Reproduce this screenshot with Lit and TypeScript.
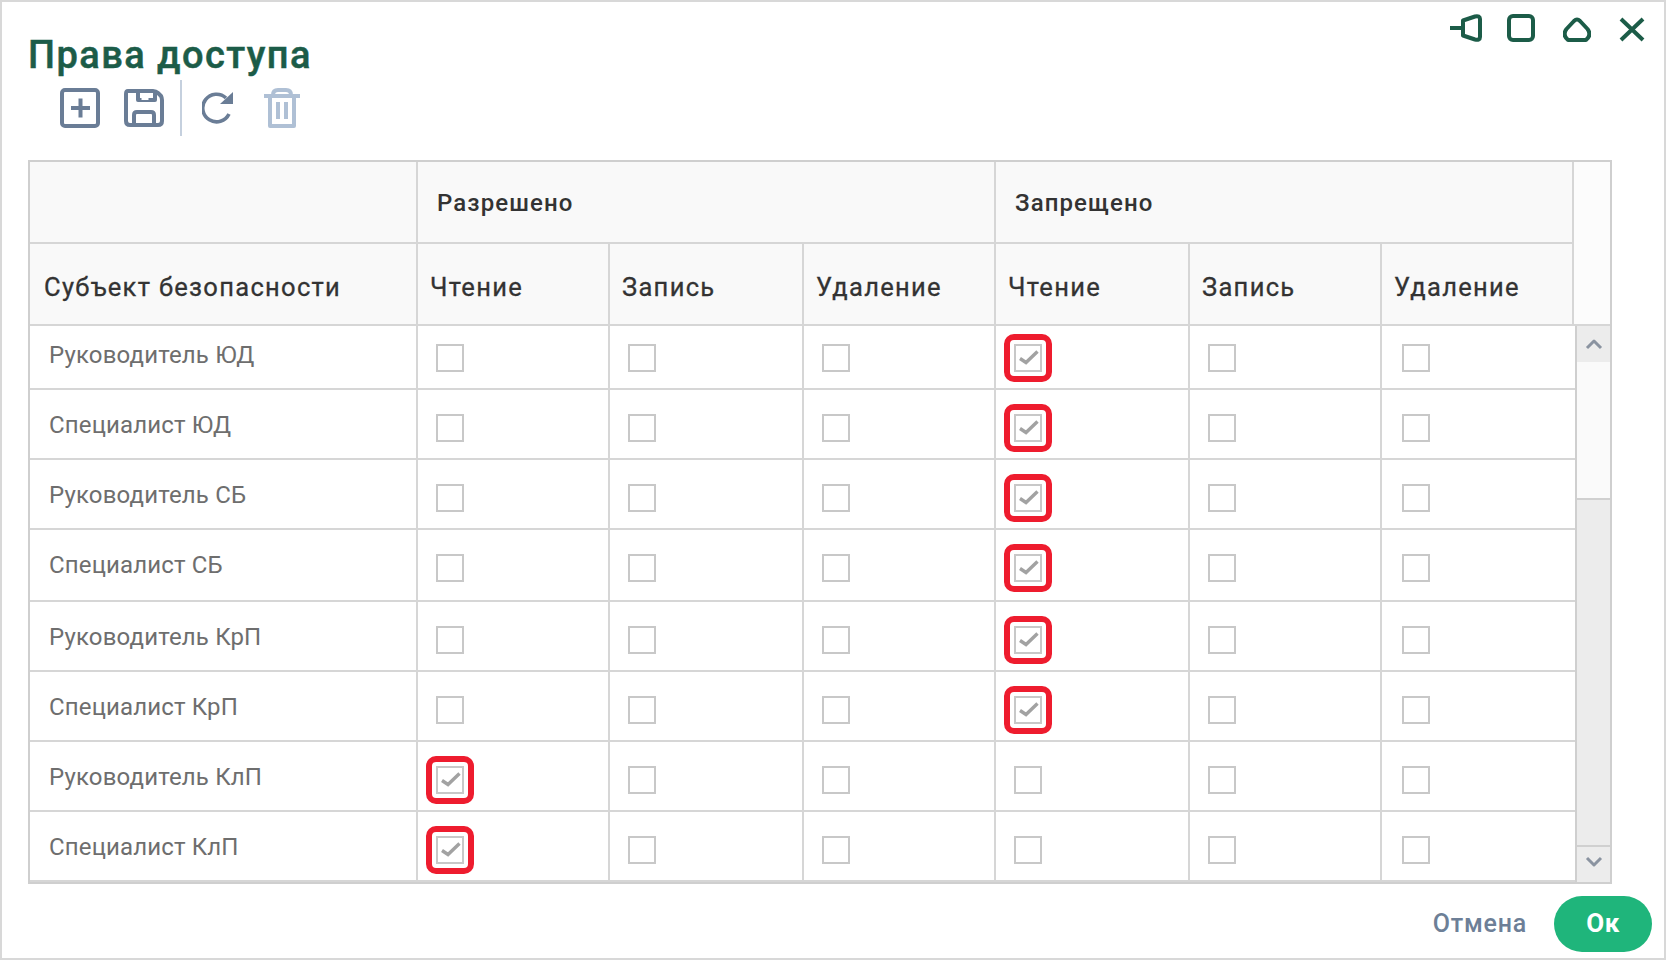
import { LitElement, html, css, svg } from "lit";
import { customElement } from "lit/decorators.js";

interface Row { name: string; checked: number[]; cls: string; }

const ROWS: Row[] = [
  { name: "Руководитель ЮД", checked: [3], cls: "short" },
  { name: "Специалист ЮД", checked: [3], cls: "" },
  { name: "Руководитель СБ", checked: [3], cls: "" },
  { name: "Специалист СБ", checked: [3], cls: "tall" },
  { name: "Руководитель КрП", checked: [3], cls: "" },
  { name: "Специалист КрП", checked: [3], cls: "" },
  { name: "Руководитель КлП", checked: [0], cls: "" },
  { name: "Специалист КлП", checked: [0], cls: "" },
];
const COLS = ["Чтение", "Запись", "Удаление", "Чтение", "Запись", "Удаление"];

@customElement("app-root")
export class AppRoot extends LitElement {
  static styles = css`
    :host { display: block; width: 1666px; height: 960px; }
    * { box-sizing: border-box; }
    .dialog {
      width: 1666px; height: 960px; background: #fff;
      border: 2px solid #d8d8d8;
      font-family: Roboto, "Noto Sans", sans-serif;
      display: flex; flex-direction: column;
    }
    .top { height: 78px; display: flex; justify-content: space-between; align-items: flex-start; padding-left: 26px; }
    .title {
      margin: 31px 0 0; font-size: 38px; line-height: 44px; font-weight: 500;
      color: #1c5c48; letter-spacing: 1.45px; -webkit-text-stroke: 0.5px #1c5c48;
    }
    .win { display: flex; margin-top: 12px; margin-right: 19px; }
    .win svg { display: block; }
    .win .g1 { width: 25px; }
    .win .g2 { width: 28px; }
    .win .g3 { width: 28px; }
    .tools { height: 56px; display: flex; align-items: center; padding-left: 58px; }
    .tools svg { display: block; }
    .tools .sep { width: 2px; height: 56px; background: #c5d0de; margin: 0 20px 0 16px; }
    .tools .gap { width: 24px; }
    .tools .gap2 { width: 28px; }
    .table {
      margin: 24px 0 0 26px; width: 1584px;
      border: 2px solid #cfcfcf;
    }
    .head {
      display: grid; grid-template-columns: 388px 192px 194px 192px 194px 192px 192px 36px;
      grid-template-rows: 82px 82px; background: #f9f9f9;
      color: #333; font-size: 24px; font-weight: 500; letter-spacing: 1.1px;
    }
    .hc { border-right: 2px solid #d6d6d6; border-bottom: 2px solid #d6d6d6; display: flex; align-items: center; white-space: nowrap; }
    .hc.group { grid-column: span 3; padding-left: 19px; padding-top: 2px; }
    .hc.col { padding-left: 12px; padding-top: 6px; font-size: 25.5px; letter-spacing: 1.3px; font-weight: 400; -webkit-text-stroke: 0.3px #333; }
    .hc.first { padding-left: 14px; padding-top: 6px; font-size: 25.5px; letter-spacing: 1.3px; font-weight: 400; -webkit-text-stroke: 0.3px #333; }
    .hc.extra { grid-column: 8; grid-row: 1 / span 2; background: #fcfcfc; border-right: 0; }
    .body { display: flex; }
    .rows { width: 1545px; }
    .row {
      display: grid; grid-template-columns: 388px 192px 194px 192px 194px 192px 193px;
      height: 70px; border-bottom: 2px solid #d6d6d6;
    }
    .row.short { height: 64px; }
    .row.tall { height: 72px; }
    .cell { border-right: 2px solid #d6d6d6; display: flex; align-items: flex-end; padding: 0 0 16px 18px; }
    .row.tall .cell { padding-bottom: 18px; }
    .cell:last-child { border-right: 0; padding-left: 20px; }
    .name {
      padding: 0 0 19px 19px; color: #6e6e6e; font-size: 24px; letter-spacing: 0.15px;
      white-space: nowrap; line-height: 28px; border-right: 2px solid #d6d6d6;
      display: flex; align-items: flex-end;
    }
    .row.tall .name { padding-bottom: 21px; }
    .cb { width: 28px; height: 28px; border: 2px solid #c8c8c8; position: relative; background: #fff; }
    .cb svg { position: absolute; left: -2px; top: -2px; display: block; }
    .cb.on::after {
      content: ""; position: absolute; inset: -12px;
      border: 6px solid #ee1c2e; border-radius: 10px;
    }
    .scroll {
      width: 37px; border-left: 2px solid #cfcfcf; background: #ececec;
      display: flex; flex-direction: column;
    }
    .btn { height: 36px; background: #ececec; display: flex; align-items: center; justify-content: center; }
    .thumb { height: 138px; background: #fafafa; border-bottom: 2px solid #d0d0d0; }
    .spacer { flex: 1; }
    .btn.down { height: 37px; border-top: 2px solid #d0d0d0; padding-bottom: 5px; }
    .foot {
      display: flex; justify-content: flex-end; align-items: center;
      margin-top: 12px; padding-right: 12px; gap: 27px;
    }
    .cancel { color: #6d7f97; font-size: 25px; font-weight: 500; letter-spacing: 0.8px; padding-bottom: 2px; }
    .ok {
      width: 98px; height: 56px; border-radius: 28px; background: #1fb57b; color: #fff;
      display: flex; align-items: center; justify-content: center;
      font-size: 26px; font-weight: 700; letter-spacing: 0.5px; padding-bottom: 2px;
    }
  `;

  private ico(w: number, h: number, color: string, sw: number, body: unknown) {
    return html`<svg width=${w} height=${h} viewBox="0 0 ${w} ${h}" fill="none" stroke=${color} stroke-width=${sw} stroke-linejoin="round">${body}</svg>`;
  }

  private checkbox(on: boolean) {
    return html`<div class="cb ${on ? "on" : ""}">
      ${on
        ? html`<svg width="28" height="28" viewBox="0 0 28 28" fill="none" stroke="#a2a2a2" stroke-width="3.4"><path d="M6 14.5 L12 18.5 L23.5 7.5" /></svg>`
        : ""}
    </div>`;
  }

  render() {
    const g = "#1c5c48";
    const b = "#6a7d96";
    const l = "#afc0d5";
    return html`
      <div class="dialog">
        <div class="top">
          <h1 class="title">Права доступа</h1>
          <div class="win">
            ${this.ico(32, 28, g, 4, svg`<path d="M0 14H13M13 6.5L25 2.5Q30 1.5 30 5V23Q30 26.5 25 25.5L13 21.5Z"/>`)}
            <div class="g1"></div>
            ${this.ico(28, 28, g, 4, svg`<rect x="2" y="2" width="24" height="24" rx="4"/>`)}
            <div class="g2"></div>
            ${this.ico(28, 28, g, 4, svg`<path d="M11 7Q14 4 17 7L24.5 15Q29 21 23 26H5Q-1 21 3.5 15Z"/>`)}
            <div class="g3"></div>
            ${this.ico(26, 28, g, 4, svg`<path d="M2 5L24 26M24 5L2 26"/>`)}
          </div>
        </div>
        <div class="tools">
          ${this.ico(40, 40, b, 4, svg`<rect x="2" y="2" width="36" height="36" rx="3"/><path d="M11 20H30M20.5 10.5V29.5" />`)}
          <div class="gap"></div>
          ${this.ico(40, 40, b, 4, svg`<path d="M4 3H29Q32 3 34 5L37 8Q38 10 38 12V33Q38 37 34 37H6Q2 37 2 33V6Q2 3 4 3Z"/><path d="M14 3V12H31V3" /><path d="M10 37V27Q10 24 13 24H27Q30 24 30 27V37" /><path d="M21 4V9" stroke-width="7" stroke="#fff" transform="translate(0 3)"/>`)}
          <div class="sep"></div>
          ${this.ico(34, 36, b, 3.6, svg`<path d="M27 24A13.8 13.8 0 1 1 24 8"/><path d="M31 2V14H18" stroke-width="0" fill="${b}"/>`)}
          <div class="gap2"></div>
          ${this.ico(36, 40, l, 4, svg`<path d="M0 8H36M9 7Q9 2 14 2H22Q27 2 27 7" /><path d="M6 8V38H30V8" /><path d="M14 14V31M22 14V31" />`)}
        </div>
        <div class="table">
          <div class="head">
            <div class="hc"></div>
            <div class="hc group">Разрешено</div>
            <div class="hc group">Запрещено</div>
            <div class="hc extra"></div>
            <div class="hc first">Субъект безопасности</div>
            ${COLS.map((c) => html`<div class="hc col">${c}</div>`)}
          </div>
          <div class="body">
            <div class="rows">
              ${ROWS.map(
                (r) => html`<div class="row ${r.cls}">
                  <div class="name">${r.name}</div>
                  ${COLS.map((_, i) => html`<div class="cell">${this.checkbox(r.checked.includes(i))}</div>`)}
                </div>`
              )}
            </div>
            <div class="scroll">
              <div class="btn">${this.ico(18, 12, "#8a93a0", 3, svg`<path d="M2 10L9 3L16 10"/>`)}</div>
              <div class="thumb"></div>
              <div class="spacer"></div>
              <div class="btn down">${this.ico(18, 12, "#8a93a0", 3, svg`<path d="M2 2L9 9L16 2"/>`)}</div>
            </div>
          </div>
        </div>
        <div class="foot">
          <div class="cancel">Отмена</div>
          <div class="ok">Ок</div>
        </div>
      </div>
    `;
  }
}
